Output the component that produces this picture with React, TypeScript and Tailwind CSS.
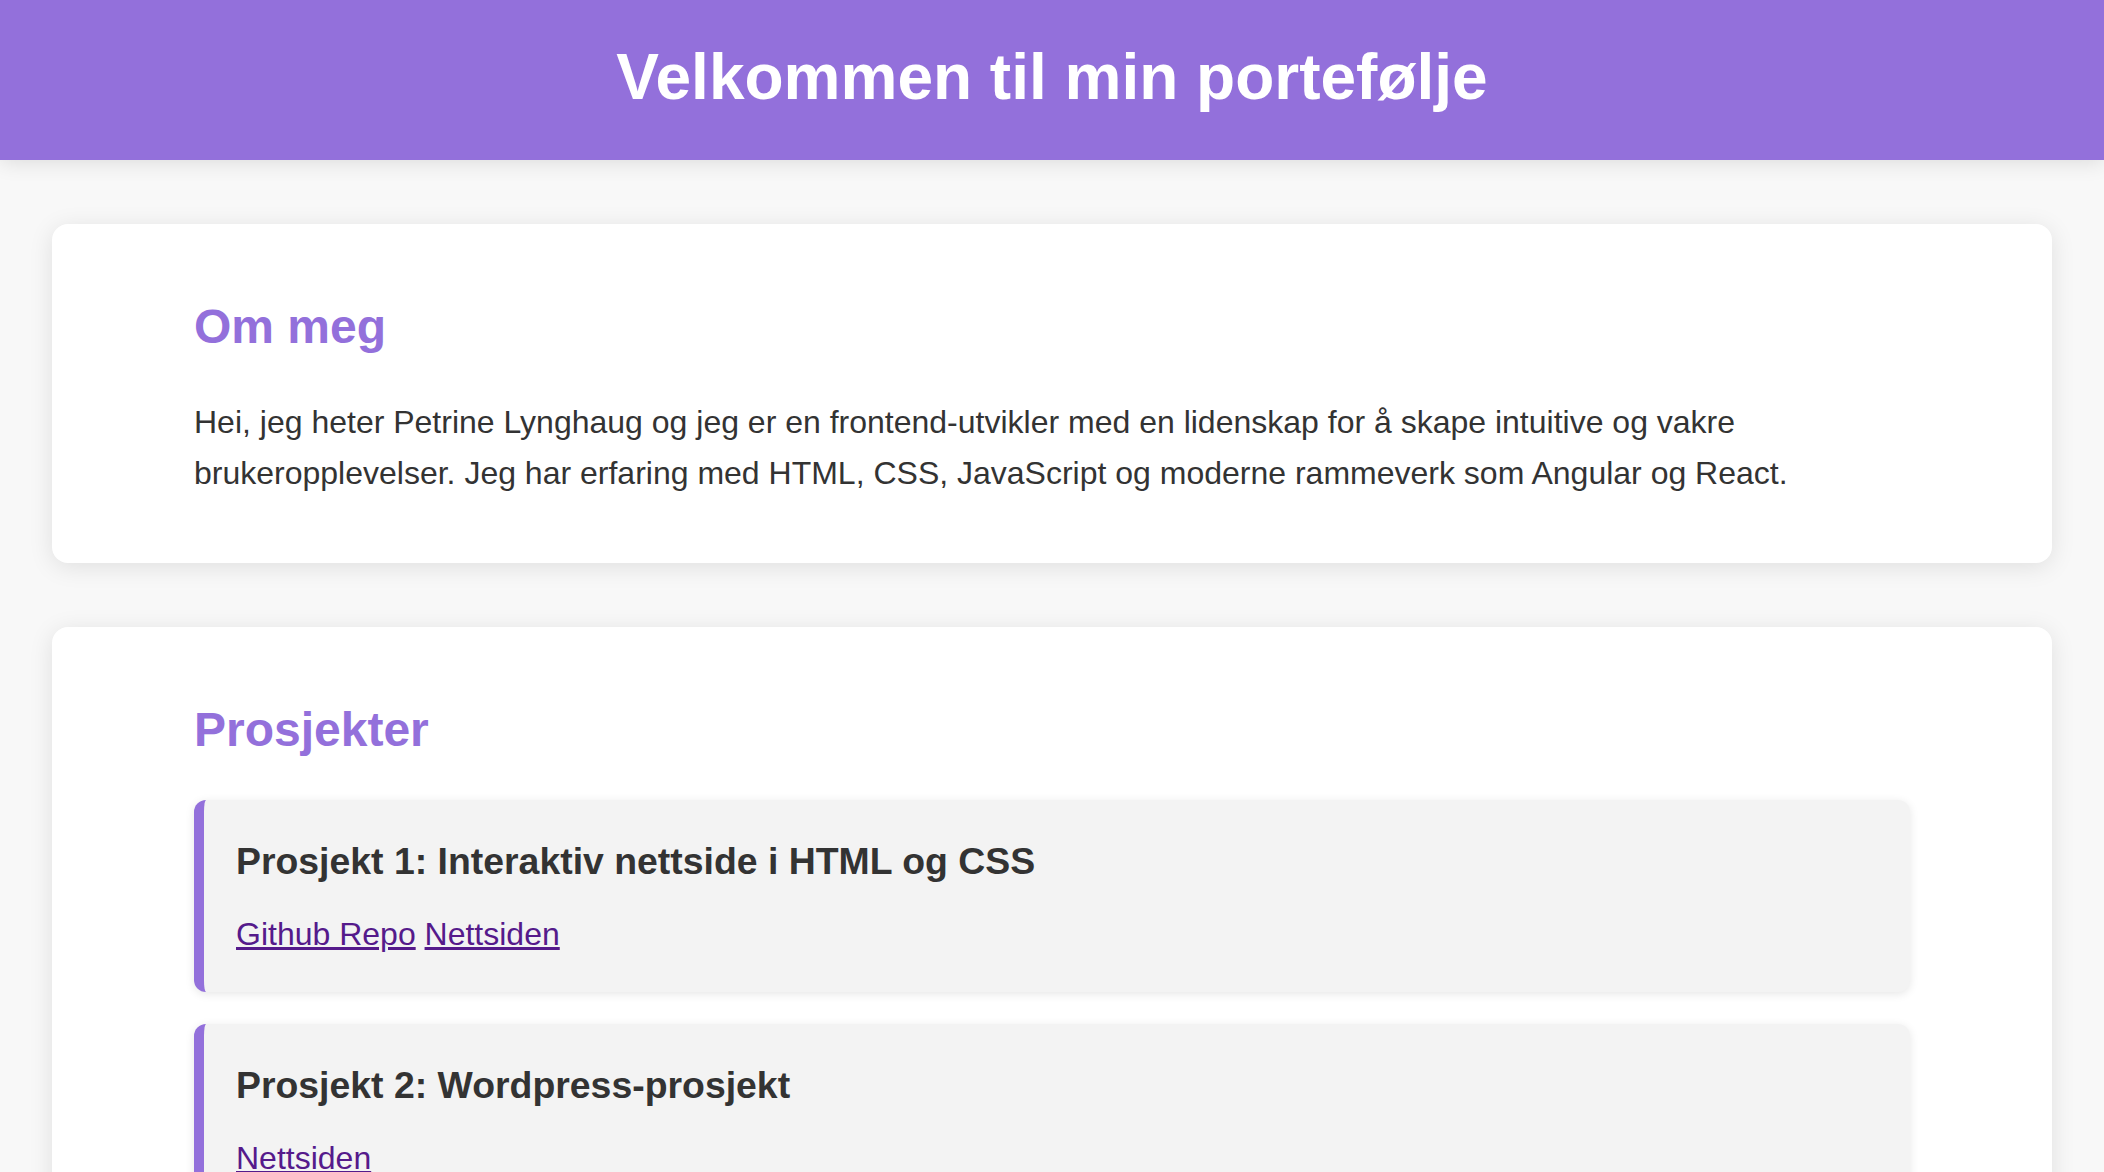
export default function App() {
  const font = { fontFamily: '"Liberation Sans", Arial, Helvetica, sans-serif' };
  return (
    <div className="min-h-[1172px] bg-[#f8f8f8] text-[#333333]" style={font}>
      <header className="h-[160px] bg-[#9370db] text-white shadow-[0_2px_20px_rgba(0,0,0,0.12)] relative z-10 pt-[26px]">
        <h1 className="text-center text-[64px] font-bold leading-[102.4px]">Velkommen til min portefølje</h1>
      </header>
      <main className="w-[2000px] mx-auto pt-[64px] flex flex-col gap-[64px] pb-[64px]">
        <section className="bg-white rounded-[16px] shadow-[0_4px_24px_rgba(0,0,0,0.1)] px-[142px] pt-[65px] pb-[64px]">
          <h2 className="text-[48px] font-bold leading-[76.8px] text-[#9370db] mb-[31px]">Om meg</h2>
          <p className="text-[32px] leading-[51.2px]">
            Hei, jeg heter Petrine Lynghaug og jeg er en frontend-utvikler med en lidenskap for å skape intuitive og vakre brukeropplevelser. Jeg har erfaring med HTML, CSS, JavaScript og moderne rammeverk som Angular og React.
          </p>
        </section>
        <section className="bg-white rounded-[16px] shadow-[0_4px_24px_rgba(0,0,0,0.1)] px-[142px] pt-[65px] pb-[65px]">
          <h2 className="text-[48px] font-bold leading-[76.8px] text-[#9370db] mb-[31px]">Prosjekter</h2>
          <div className="flex flex-col gap-[32px]">
            <div className="bg-[#f3f3f3] rounded-[12px] border-l-[10px] border-[#9370db] shadow-[0_2px_10px_rgba(0,0,0,0.1)] p-[32px]">
              <h3 className="text-[37.4px] font-bold leading-[59.9px] mb-[17px]">Prosjekt 1: Interaktiv nettside i HTML og CSS</h3>
              <p className="text-[32px] leading-[51.2px]">
                <a href="#" className="text-[#551a8b] underline">Github Repo</a>{" "}
                <a href="#" className="text-[#551a8b] underline">Nettsiden</a>
              </p>
            </div>
            <div className="bg-[#f3f3f3] rounded-[12px] border-l-[10px] border-[#9370db] shadow-[0_2px_10px_rgba(0,0,0,0.1)] p-[32px]">
              <h3 className="text-[37.4px] font-bold leading-[59.9px] mb-[17px]">Prosjekt 2: Wordpress-prosjekt</h3>
              <p className="text-[32px] leading-[51.2px]">
                <a href="#" className="text-[#551a8b] underline">Nettsiden</a>
              </p>
            </div>
          </div>
        </section>
      </main>
    </div>
  );
}
